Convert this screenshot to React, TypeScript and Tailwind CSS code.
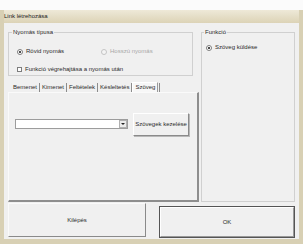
const font = { fontFamily: '"Liberation Sans", Arial, sans-serif' };

const Radio = ({ checked, disabled }: { checked?: boolean; disabled?: boolean }) => (
  <span
    className={`flex h-[6px] w-[6px] shrink-0 items-center justify-center rounded-full border ${
      disabled ? 'border-[#c4c4c4] bg-[#f4f4f4]' : 'border-[#7d7d7d] bg-white'
    }`}
  >
    {checked && <span className="h-[2px] w-[2px] rounded-full bg-[#111]" />}
  </span>
);

const Tab = ({ label, active }: { label: string; active?: boolean }) => (
  <div
    className={
      active
        ? 'flex h-[10px] items-center border border-b-0 border-[#9a9a9a] border-t-white border-l-white bg-[#f7f7f7] px-[2px]'
        : 'flex h-[9px] items-center border-r border-[#8c8c8c] px-[2px]'
    }
  >
    {label}
  </div>
);

export default function App() {
  return (
    <div
      className="flex h-[244px] w-[303px] flex-col bg-[#fbfbfb] text-[6px] leading-[7px] text-[#2a2a2a]"
      style={font}
    >
      <div className="h-[10px]" />
      {/* window frame */}
      <div className="flex flex-1 flex-col border-b-[5px] border-l-[4px] border-r-[4px] border-[#d8d0b4] bg-[#d8d0b4]">
        <div className="flex h-[13px] items-center bg-gradient-to-b from-[#eee9d8] to-[#dcd3b6] text-[#222]">
          Link létrehozása
        </div>
        <div className="flex flex-1 flex-col bg-[#f0f0f0] pl-[4px] pr-[4px] pt-[3px]">
          <div className="flex h-[176px] gap-[2px]">
            {/* left column */}
            <div className="flex w-[191px] flex-col">
              <fieldset className="mr-[6px] mt-[3px] flex h-[47px] flex-col border border-[#d0d0d0] px-[3px]">
                <legend className="px-[1px]">Nyomás típusa</legend>
                <div className="ml-[5px] mt-[12px] flex items-center">
                  <div className="flex w-[84px] items-center gap-[3px]">
                    <Radio checked />
                    <span>Rövid nyomás</span>
                  </div>
                  <div className="flex items-center gap-[3px] text-[#a8a8a8]">
                    <Radio disabled />
                    <span>Hosszú nyomás</span>
                  </div>
                </div>
                <div className="ml-[5px] mt-[11px] flex items-center gap-[3px]">
                  <span className="h-[5px] w-[5px] border border-[#7d7d7d] bg-white" />
                  <span>Funkció végrehajtása a nyomás után</span>
                </div>
              </fieldset>
              {/* tabs */}
              <div className="mt-[6px] flex items-end pl-[3px]">
                <Tab label="Bemenet" />
                <Tab label="Kimenet" />
                <Tab label="Feltételek" />
                <Tab label="Késleltetés" />
                <Tab label="Szöveg" active />
                <div className="h-[9px] w-[2px] border-r border-[#8c8c8c]" />
              </div>
              <div className="flex flex-1 items-start gap-[5px] border-b-2 border-l border-r-2 border-t border-[#8e8e8e] border-l-[#fafafa] border-t-[#fafafa] pl-[6px] pt-[20px]">
                <div className="mt-[6px] flex h-[10px] w-[113px] items-center justify-end border border-[#9c9c9c] bg-white">
                  <div className="flex h-[8px] w-[8px] items-center justify-center border border-[#b0b0b0] bg-[#ebebeb]">
                    <span className="h-0 w-0 border-l-[2px] border-r-[2px] border-t-[2px] border-l-transparent border-r-transparent border-t-[#222]" />
                  </div>
                </div>
                <div className="flex h-[23px] w-[56px] items-center justify-center border border-[#8a8a8a] border-l-white border-t-white bg-[#f0f0f0] shadow-[1px_1px_0_#b8b8b8]">
                  Szövegek kezelése
                </div>
              </div>
            </div>
            {/* right column */}
            <fieldset className="mt-[3px] flex flex-1 flex-col border border-[#d0d0d0] px-[2px]">
              <legend className="px-[1px]">Funkció</legend>
              <div className="ml-[2px] mt-[8px] flex items-center gap-[3px]">
                <Radio checked />
                <span>Szöveg küldése</span>
              </div>
            </fieldset>
          </div>
          {/* buttons */}
          <div className="mt-[1px] flex gap-[13px]">
            <div className="flex h-[34px] w-[138px] items-center justify-center border border-[#8a8a8a] border-l-[#fafafa] border-t-[#fafafa] bg-[#f0f0f0]">
              Kilépés
            </div>
            <div className="mt-[3px] flex h-[32px] w-[136px] items-center justify-center border border-[#555] bg-[#f0f0f0]">
              <div className="flex h-full w-full items-center justify-center border border-[#999] border-l-white border-t-white">
                OK
              </div>
            </div>
          </div>
        </div>
      </div>
    </div>
  );
}
